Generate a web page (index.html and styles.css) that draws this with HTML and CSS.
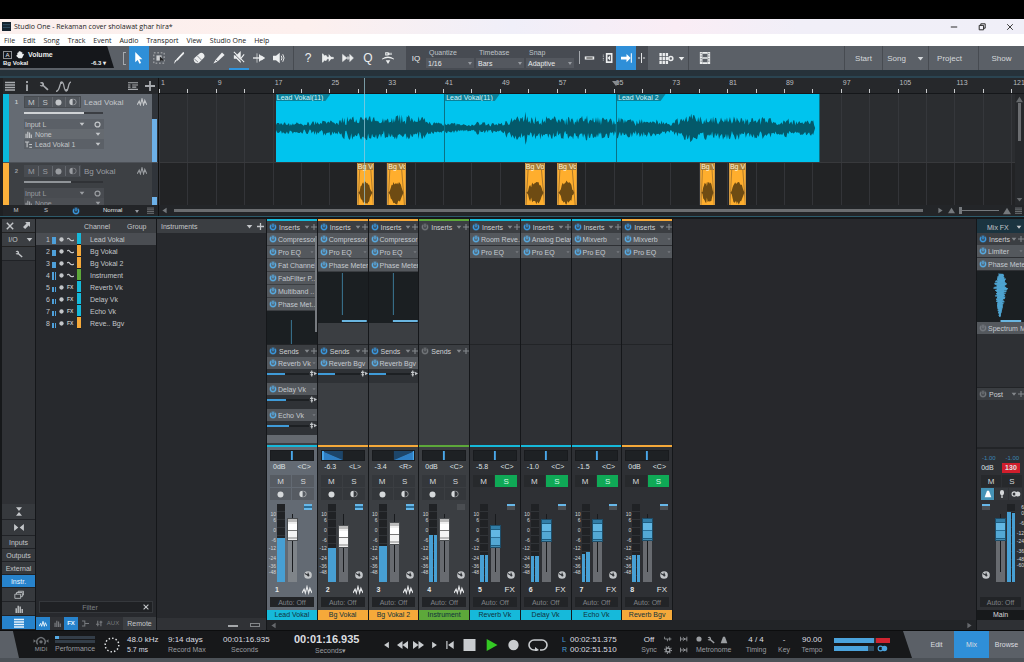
FILE: index.html
```html
<!DOCTYPE html>
<html lang="en">
<head>
<meta charset="utf-8">
<title>Studio One - Rekaman cover sholawat ghar hira*</title>
<link rel="stylesheet" href="styles.css">
</head>
<body>
<svg class="sprite" aria-hidden="true">
  <symbol id="power" viewBox="0 0 12 12"><circle cx="6" cy="6" r="5.500" fill="currentColor" opacity=".3"/><path d="M3.300 3.200a4 4 0 1 0 5.400 0M6 1v5" fill="none" stroke="currentColor" stroke-width="1.700"/></symbol>
  <symbol id="down" viewBox="0 0 10 10"><path d="M1 3h8L5 8z" fill="currentColor"/></symbol>
  <symbol id="left" viewBox="0 0 10 10"><path d="M8 1v8L2 5z" fill="currentColor"/></symbol>
  <symbol id="right" viewBox="0 0 10 10"><path d="M2 1v8l6-4z" fill="currentColor"/></symbol>
  <symbol id="play" viewBox="0 0 10 10"><path d="M1 0v10l9-5z" fill="currentColor"/></symbol>
  <symbol id="up" viewBox="0 0 10 10"><path d="M0 9h10L5 1z" fill="currentColor"/></symbol>
  <symbol id="plus" viewBox="0 0 10 10"><path d="M5 0v10M0 5h10" stroke="currentColor" stroke-width="1.800"/></symbol>
  <symbol id="close" viewBox="0 0 10 10"><path d="M1 1l8 8M9 1L1 9" stroke="currentColor" stroke-width="1.800"/></symbol>
  <symbol id="menu" viewBox="0 0 10 10"><path d="M0 1.500h10M0 4h10M0 6.500h10M0 9h10" stroke="currentColor" stroke-width="1.300"/></symbol>
  <symbol id="info" viewBox="0 0 10 10"><path d="M5 0v2M5 3.400V10" stroke="currentColor" stroke-width="1.800"/></symbol>
  <symbol id="wrench" viewBox="0 0 12 12"><path d="M1 2.500c1-2 4.500-1.800 5 1 .1.800 0 1.300 0 1.500L11.500 9.800 10 11.300 5 6.600C3 7 1.500 6.500 1 4.800L3.300 5 4.200 3.500z" fill="currentColor"/></symbol>
  <symbol id="curve" viewBox="0 0 14 10"><path d="M0 9.500C4 9.500 3 1 5.500 1S7 9 9.500 9 11 1 14 1" fill="none" stroke="currentColor" stroke-width="1.200"/><circle cx="5" cy="1.500" r="1.200" fill="currentColor"/><circle cx="9.500" cy="8.500" r="1.200" fill="currentColor"/></symbol>
  <symbol id="rows" viewBox="0 0 12 10"><path d="M0 1h12M0 9h12M0 3.700h3M5 3.700h7M0 6.300h3M5 6.300h5" stroke="currentColor" stroke-width="1.300"/></symbol>
  <symbol id="wave" viewBox="0 0 12 10"><path d="M0 8.500L2.500 4l1.500 4.500L6 1l2 7.500L9.500 3 12 8.500" fill="none" stroke="currentColor" stroke-width="1.400"/></symbol>
  <symbol id="rec" viewBox="0 0 10 10"><circle cx="5" cy="5" r="4.300" fill="currentColor"/></symbol>
  <symbol id="half" viewBox="0 0 10 10"><path d="M4.500 1a4 4 0 0 0 0 8z" fill="currentColor"/><path d="M5.500 1.500a3.500 3.500 0 0 1 0 7" fill="none" stroke="currentColor" opacity=".7"/></symbol>
  <symbol id="ring" viewBox="0 0 10 10"><circle cx="5" cy="5" r="3.500" fill="none" stroke="currentColor" stroke-width="1.800"/></symbol>
  <symbol id="bars" viewBox="0 0 10 10"><path d="M1.500 4v6M4 1v9M6.500 2v8M9 5v5" stroke="currentColor" stroke-width="1.700"/></symbol>
  <symbol id="notes" viewBox="0 0 10 10"><path d="M0 1.500h6M3 1v8M6 5h4M6 9h4" stroke="currentColor" stroke-width="1.600"/></symbol>
  <symbol id="bus" viewBox="0 0 10 10"><path d="M0 1.500h4v7H0M4 5h6" fill="none" stroke="currentColor" stroke-width="1.500"/></symbol>
  <symbol id="vca" viewBox="0 0 10 10"><path d="M2.500 1v8M7 1v8M0 6h5M5 3h4" stroke="currentColor" stroke-width="1.600"/></symbol>
  <symbol id="knob" viewBox="0 0 10 10"><circle cx="5" cy="5" r="4.800" fill="currentColor"/><path d="M5.500 5.500L1 3M5.500 5.500L5 2" stroke="#34373b" stroke-width="1.400"/><circle cx="5.500" cy="5.500" r="1.300" fill="#34373b"/></symbol>
  <symbol id="arrow" viewBox="0 0 12 16"><path d="M1 0l9.500 9.500H6.400l2.400 5-2.200 1-2.300-5L1 13.500z" fill="currentColor"/></symbol>
  <symbol id="range" viewBox="0 0 14 14"><path d="M1 1h12v12H1z" fill="none" stroke="currentColor" stroke-dasharray="2 2" opacity=".7"/><path d="M4 4h6v6H4z" fill="currentColor" opacity=".8"/><path d="M8 5l5 5H9l-1 2z" fill="#222"/></symbol>
  <symbol id="knife" viewBox="0 0 14 14"><path d="M13 0L5.500 9.500 4 8.500 12 0zM4.500 10L1 14l1.500-4.800z" fill="currentColor"/><path d="M12.500 1L4 10" stroke="currentColor" stroke-width="1.800"/></symbol>
  <symbol id="eraser" viewBox="0 0 14 14"><path d="M8 1.500c2-2 7 1 5 5L7 12.500c-3 2-7-1-6-5z" fill="currentColor"/><path d="M5 4.500l5 5M1.500 8l4.500 4" stroke="#555b62" stroke-width=".8"/></symbol>
  <symbol id="pencil" viewBox="0 0 14 14"><path d="M10.500.5l3 3L5 11.500l-4.500 2L3 9z" fill="currentColor"/><path d="M3 9l2.500 2" stroke="#555b62"/></symbol>
  <symbol id="mute" viewBox="0 0 14 14"><path d="M1 5h3l5-5v14L4 9H1z" fill="currentColor"/><path d="M1 1l12 12M13 4l-4 5" stroke="currentColor" stroke-width="1.300"/><path d="M0 2l11 11" stroke="#555b62"/></symbol>
  <symbol id="bend" viewBox="0 0 18 14"><path d="M0 7h17" stroke="currentColor" stroke-width="2"/><path d="M6 0v14" stroke="currentColor"/><path d="M9 1l2 2 3 1 4 3-4 3-3 1-2 2z" fill="currentColor"/></symbol>
  <symbol id="speaker" viewBox="0 0 16 14"><path d="M0 4h4l5-4v14L4 10H0z" fill="currentColor"/><path d="M11 4q2 3 0 6M13 2q3.500 5 0 10" fill="none" stroke="currentColor" stroke-width="1.300"/></symbol>
  <symbol id="strip" viewBox="0 0 18 14"><path d="M1 0v14M1 1l3 3 2-1 2 3h9v2H8l-2 3-2-1-3 3z" fill="currentColor" stroke="currentColor"/><path d="M10 1v12l5-6z" fill="currentColor"/></symbol>
  <symbol id="stretch" viewBox="0 0 20 14"><path d="M1 1v12l6-5V6zM13 1v12l6-6z" fill="currentColor" stroke="currentColor"/><path d="M6 7h8M10 4v6" stroke="currentColor" stroke-width="1.500"/></symbol>
  <symbol id="follow" viewBox="0 0 16 16"><path d="M0 9q8-6 16 0v1q-8-4-16 0zM5 11h6l-3 5z" fill="currentColor"/><path d="M5 1h3v3H5zM9.500 1v3M12 1v3" fill="none" stroke="currentColor" stroke-width="1.500"/></symbol>
  <symbol id="capsule" viewBox="0 0 14 8"><path d="M1 4h12" stroke="currentColor" stroke-width="4"/><path d="M3 4h8" stroke="#444" stroke-width="1.500"/></symbol>
  <symbol id="box" viewBox="0 0 12 12"><path d="M5 1h6v10H5z" fill="none" stroke="currentColor" stroke-width="2"/><path d="M9 3v6L6 6z" fill="currentColor"/><path d="M1 2v8" stroke="currentColor" stroke-dasharray="1 1"/></symbol>
  <symbol id="snap" viewBox="0 0 16 14"><path d="M0 5h8V1l6 6-6 6V9H0z" fill="currentColor"/><path d="M15 0v14" stroke="currentColor" stroke-width="1.500"/></symbol>
  <symbol id="cross" viewBox="0 0 12 14"><path d="M6 0v14M1 7h3M8 7h3" stroke="currentColor" stroke-width="1.300"/></symbol>
  <symbol id="grid" viewBox="0 0 18 14"><path d="M1.500 0v14M5.500 0v14M9.500 0v14" stroke="currentColor" stroke-width="3" stroke-dasharray="4 1"/><circle cx="14.500" cy="7" r="2.500" fill="none" stroke="currentColor" stroke-width="2"/></symbol>
  <symbol id="film" viewBox="0 0 12 14"><path d="M0 0h3v14H0zM9 0h3v14H9z" fill="currentColor"/><path d="M3 1h6M3 7h6M3 13h6" stroke="currentColor" stroke-width="2"/><path d="M1.500 1v12M10.500 1v12" stroke="#555b62" stroke-dasharray="1.500 1.500"/></symbol>
  <symbol id="hand" viewBox="0 0 12 12"><path d="M2 6V2.500h1.500V1H5V0h1.500v1H8v1h1.500v3L11 4l1 1-3 6H4L0 7z" fill="currentColor"/></symbol>
  <symbol id="popout" viewBox="0 0 10 10"><path d="M3 0h7v7L8 5 3 10 0 7l5-5z" fill="currentColor"/></symbol>
  <symbol id="stack" viewBox="0 0 12 10"><path d="M1 4h7v5H1zM3 4V2h7v5H8M5 2V.5h6.500V5H10" fill="none" stroke="currentColor"/></symbol>
  <symbol id="sine" viewBox="0 0 14 8"><path d="M0 3q3-3 6 1t8 1" fill="none" stroke="currentColor" stroke-width="2.500"/></symbol>
  <symbol id="vpin" viewBox="0 0 10 16"><path d="M0 1h10L5 7zM0 15h10L5 9z" fill="currentColor"/></symbol>
  <symbol id="hpin" viewBox="0 0 16 10"><path d="M1 0v10l6-5zM15 0v10L9 5z" fill="currentColor"/></symbol>
  <symbol id="rew" viewBox="0 0 14 10"><path d="M7 0v10L0 5zM14 0v10L7 5z" fill="currentColor"/></symbol>
  <symbol id="ffw" viewBox="0 0 14 10"><path d="M0 0v10l7-5zM7 0v10l7-5z" fill="currentColor"/></symbol>
  <symbol id="tostart" viewBox="0 0 12 10"><path d="M10 0v10L3 5z" fill="currentColor"/><path d="M1.500 0v10" stroke="currentColor" stroke-width="1.500"/></symbol>
  <symbol id="stop" viewBox="0 0 10 10"><path d="M0 0h10v10H0z" fill="currentColor"/></symbol>
  <symbol id="loop" viewBox="0 0 20 12"><path d="M8 11H6A5 5 0 0 1 6 1h8a5 5 0 0 1 0 10h-2" fill="none" stroke="currentColor" stroke-width="1.600"/><path d="M7 8l4 3-4 2z" fill="currentColor"/></symbol>
  <symbol id="midi" viewBox="0 0 18 12"><path d="M5 10a5 5 0 1 1 8 0" fill="none" stroke="currentColor" stroke-width="1.800"/><circle cx="9" cy="7" r="2" fill="currentColor"/><path d="M0 4l3 2-3 2zM18 4l-3 2 3 2z" fill="currentColor"/></symbol>
  <symbol id="gear" viewBox="0 0 12 12"><circle cx="6" cy="6" r="3" fill="none" stroke="currentColor" stroke-width="2"/><circle cx="6" cy="6" r="5" fill="none" stroke="currentColor" stroke-dasharray="1.500 2.400" stroke-width="2"/></symbol>
  <symbol id="metro" viewBox="0 0 12 12"><path d="M4.500 1h3l3.500 10H1z" fill="currentColor"/></symbol>
  <symbol id="punch" viewBox="0 0 14 10"><path d="M1 1v4h5v4M6 5h7M10 2v6" fill="none" stroke="currentColor" stroke-width="1.400"/></symbol>
  <symbol id="preroll" viewBox="0 0 14 10"><path d="M1 1v8M1 5h11M12 1v8M5 2l4 3-4 3" fill="none" stroke="currentColor" stroke-width="1.500"/></symbol>
  <symbol id="dots" viewBox="0 0 16 16"><circle cx="8" cy="8" r="6.800" fill="none" stroke="currentColor" stroke-width="1.500" stroke-dasharray="1.500 2.050"/></symbol>
  <symbol id="link" viewBox="0 0 14 8"><circle cx="4.500" cy="4" r="3" fill="none" stroke="currentColor" stroke-width="1.500"/><circle cx="9.500" cy="4" r="3.500" fill="currentColor"/></symbol>
  <symbol id="mic" viewBox="0 0 8 12"><path d="M4 0a3 3 0 0 1 3 3v2a3 3 0 0 1-6 0V3a3 3 0 0 1 3-3zM3 8h2v4H3z" fill="currentColor"/></symbol>
  <symbol id="sendout" viewBox="0 0 12 10"><path d="M3 0v10M0 3h6M1 7h4" stroke="currentColor" stroke-width="2"/><path d="M7 2l5 3-5 3z" fill="currentColor"/></symbol>
</svg>

<div class="letterbox"></div>
<header class="titlebar">
  <svg class="app-mark" viewBox="0 0 10 10"><rect width="10" height="10" fill="#14222e"/><path d="M1 3h8M1 6h8" stroke="#35556b"/></svg>
  <h1>Studio One - Rekaman cover sholawat ghar hira*</h1>
  <div class="window-buttons">
    <button aria-label="Minimize"><svg viewBox="0 0 10 10"><path d="M1 5h8" stroke="#333" stroke-width="1.300"/></svg></button>
    <button aria-label="Restore"><svg viewBox="0 0 10 10"><path d="M1.500 3h5.500v5.500H1.500zM3.500 3V1H9v5.500H7" fill="none" stroke="#222" stroke-width="1.200"/></svg></button>
    <button aria-label="Close"><svg viewBox="0 0 10 10"><path d="M1.500 1.500l7 7M8.500 1.500l-7 7" stroke="#333" stroke-width="1.200"/></svg></button>
  </div>
</header>
<nav class="menubar">
  <button>File</button><button>Edit</button><button>Song</button><button>Track</button><button>Event</button><button>Audio</button><button>Transport</button><button>View</button><button>Studio One</button><button>Help</button>
</nav>

<section class="toolbar" aria-label="Tools">
  <div class="param">
    <div class="param-line"><span class="auto-box">A</span><svg class="i8"><use href="#hand"/></svg><b>Volume</b></div>
    <div class="param-line small"><b>Bg Vokal</b><b class="push">-6.3 ▾</b></div>
  </div>
  <span class="bracket"></span>
  <div class="tools" id="tools"></div>
  <div class="tools second" id="tools2"></div>
  <div class="snapbar">
    <button class="iq">IQ</button>
    <label class="pick">Quantize<select><option>1/16</option></select></label>
    <label class="pick">Timebase<select><option>Bars</option></select></label>
    <label class="pick">Snap<select><option>Adaptive</option></select></label>
    <span class="bar"></span>
    <div class="tools snaps" id="tools3"></div>
  </div>
  <button class="grid-tool" aria-label="Grid"><svg class="wide"><use href="#grid"/></svg><svg class="i7"><use href="#down"/></svg></button>
  <button class="film-tool" aria-label="Video"><svg class="i12"><use href="#film"/></svg></button>
  <div class="pages">
    <button>Start</button><button>Song<svg class="i7"><use href="#down"/></svg></button><button>Project</button><button>Show</button>
  </div>
</section>

<section class="arrange" aria-label="Arrangement">
  <div class="track-side">
    <div class="side-tools">
      <svg class="i10"><use href="#menu"/></svg><svg class="i10"><use href="#info"/></svg><svg class="i10"><use href="#wrench"/></svg><svg class="wide"><use href="#curve"/></svg>
      <svg class="i10 push"><use href="#rows"/></svg><svg class="i10"><use href="#plus"/></svg>
    </div>
    <div id="tracks"></div>
    <div class="side-foot"><button>M</button><button>S</button><button class="on" aria-label="Power"><svg class="i8"><use href="#power"/></svg></button><label class="plain"><select aria-label="Track height"><option>Normal</option></select></label><svg class="i7 dim"><use href="#menu"/></svg></div>
  </div>
  <div class="timeline">
    <div class="ruler" id="ruler"></div>
    <div class="lanes" id="lanes"></div>
    <div class="hscroll"><svg class="i7"><use href="#left"/></svg><span class="hthumb"></span><svg class="i7"><use href="#right"/></svg><svg class="i7"><use href="#up"/></svg><input class="zoom" type="range" value="0" aria-label="Zoom"><svg class="i8"><use href="#up"/></svg><svg class="i7"><use href="#menu"/></svg></div>
    <div class="vscroll"><svg class="i7"><use href="#up"/></svg><span></span><svg class="i7"><use href="#down"/></svg></div>
  </div>
</section>

<section class="mixer" aria-label="Console">
  <aside class="rail">
    <div class="rail-head"><button aria-label="Close"><svg class="i8"><use href="#close"/></svg></button><button aria-label="Detach"><svg class="i7"><use href="#popout"/></svg></button></div>
    <div class="rail-io"><button>I/O</button><button aria-label="I/O menu"><svg class="i7"><use href="#down"/></svg></button></div>
    <button class="cell" aria-label="Settings"><svg class="i8"><use href="#wrench"/></svg></button>
    <div class="fill"></div>
    <button class="cell tall" aria-label="Small"><svg class="vp"><use href="#vpin"/></svg></button>
    <button class="cell tall" aria-label="Narrow"><svg class="hp"><use href="#hpin"/></svg></button>
    <button class="cell word">Inputs</button><button class="cell word">Outputs</button><button class="cell word">External</button><button class="cell word active">Instr.</button>
    <button class="cell" aria-label="Groups"><svg class="i10"><use href="#stack"/></svg></button>
    <button class="cell" aria-label="Faders"><svg class="i8"><use href="#bars"/></svg></button>
    <button class="cell active" aria-label="List"><svg class="i10"><use href="#menu"/></svg></button>
  </aside>
  <div class="channel-list">
    <table>
      <thead><tr><th colspan="5"></th><th>Channel</th><th>Group</th></tr></thead>
      <tbody id="list"></tbody>
    </table>
    <div class="fill"></div>
    <div class="filter"><input type="text" placeholder="Filter" aria-label="Filter"><button aria-label="Clear"><svg class="i6"><use href="#close"/></svg></button></div>
    <div class="chips"><button class="active" aria-label="Audio"><svg class="i8"><use href="#wave"/></svg></button><button aria-label="Instruments"><svg class="i7"><use href="#bars"/></svg></button><button class="active">FX</button><button aria-label="Bus"><svg class="i7"><use href="#bus"/></svg></button><button aria-label="VCA"><svg class="i7"><use href="#vca"/></svg></button><button>AUX</button><button class="remote">Remote</button></div>
  </div>
  <div class="instruments">
    <div class="inst-head"><span>Instruments</span><svg class="i7 push"><use href="#down"/></svg><svg class="i7"><use href="#plus"/></svg></div>
    <div class="fill"></div>
    <div class="inst-foot"><span class="dash"></span><span class="frame"></span></div>
  </div>
  <div class="console">
    <div class="strips" id="strips"></div>
    <div class="console-foot"><svg class="i7"><use href="#left"/></svg><svg class="i7"><use href="#right"/></svg></div>
  </div>
  <div class="main-strip" id="main"></div>
</section>

<footer class="transport">
  <span class="lead-in"></span>
  <div class="t midi"><svg class="mid"><use href="#midi"/></svg><small>MIDI</small></div>
  <div class="t perf"><i class="load one"></i><i class="load"></i><small>Performance</small></div>
  <svg class="i14"><use href="#dots"/></svg>
  <div class="t rate"><span>48.0 kHz</span><small class="lit">5.7 ms</small></div>
  <div class="t days"><span>9:14 days</span><small>Record Max</small></div>
  <div class="t now"><span>00:01:16.935</span><small>Seconds</small></div>
  <div class="t big"><b>00:01:16.935</b><small>Seconds▾</small></div>
  <div class="keys" id="keys"></div>
  <div class="t locate"><span><em>L</em>00:02:51.375</span><span><em>R</em>00:02:51.510</span></div>
  <div class="t sync"><span>Off</span><small>Sync</small></div>
  <div class="t pair"><svg class="i8"><use href="#punch"/></svg><svg class="i8"><use href="#gear"/></svg></div>
  <div class="t pair"><svg class="i8"><use href="#preroll"/></svg><svg class="i8"><use href="#preroll"/></svg></div>
  <div class="t click"><div><svg class="i6"><use href="#rec"/></svg><svg class="i8"><use href="#wrench"/></svg><svg class="i8"><use href="#metro"/></svg></div><small>Metronome</small></div>
  <div class="t sig"><span>4 / 4</span><small>Timing</small></div>
  <div class="t key"><span>-</span><small>Key</small></div>
  <div class="t tempo"><span>90.00</span><small>Tempo</small></div>
  <div class="out"><i></i><i class="short"></i><svg class="mid"><use href="#link"/></svg></div>
  <div class="views"><button>Edit</button><button class="active">Mix</button><button>Browse</button></div>
</footer>
<script src="app.js"></script>
</body>
</html>
```
FILE: styles.css
```css
* { box-sizing: border-box; }
body { margin: 0; min-height: 100vh; display: flex; flex-direction: column; background: #1a1c1f; color: #c3c6c9; font: 7px/9px "Liberation Sans", Arial, sans-serif; overflow: hidden; }
button, input, select { font: inherit; color: inherit; background: none; border: 0; padding: 0; margin: 0; border-radius: 0; }
button { display: flex; align-items: center; justify-content: center; white-space: nowrap; }
input[type=range] { appearance: none; display: block; min-width: 0; }
svg { display: block; flex: none; }
.sprite { position: absolute; width: 0; height: 0; }
.i6 { width: 6px; height: 6px; } .i7 { width: 7px; height: 7px; } .i8 { width: 8px; height: 8px; }
.i10 { width: 10px; height: 10px; } .i12 { width: 12px; height: 12px; } .i14 { width: 16px; height: 16px; }
.wide { width: 15px; height: 11px; } .mid { width: 16px; height: 10px; }
.push { margin-left: auto; } .fill { flex: 1; } .dim { opacity: .5; }

.letterbox { height: 19px; background: #000; }
.titlebar { display: flex; align-items: center; height: 15px; padding-left: 2px; gap: 3px; background: linear-gradient(90deg, #fbefed, #fdf0ee 30%, #f0eff9 50%, #faedf5 66%, #f1eff8 78%, #f0eff8); font-family: "Open Sans", sans-serif; color: #222; }
.app-mark { width: 9px; height: 9px; }
.titlebar h1 { margin: 0; font-size: 7px; font-weight: 400; }
.window-buttons { display: flex; margin-left: auto; }
.window-buttons button { width: 28px; }
.window-buttons svg { width: 8px; height: 8px; }
.menubar { display: flex; gap: 8px; height: 12px; padding-left: 4px; background: #fff; color: #1c1c1c; font-family: "Open Sans", sans-serif; }

.toolbar { display: flex; align-items: stretch; height: 24px; background: #5b6067; color: #eceeef; }
.param { width: 114px; height: 24px; padding: 4px 8px 0 3px; background: #15171b; clip-path: polygon(0 0, 94% 0, 100% 92%, 0 92%); }
.param-line { display: flex; align-items: center; gap: 4px; height: 9px; }
.param-line.small { font-size: 6px; }
.auto-box { border: 1px solid #8b8e92; width: 9px; height: 8px; line-height: 7px; text-align: center; font-size: 6px; }
.bracket { width: 3px; height: 13px; margin: 6px 3px 0 9px; border: 1px solid #a5a9ae; border-right: 0; }
.tools { display: flex; }
.tools button { width: 20px; }
.tools svg { width: 12px; height: 12px; }
.tools button.active { background: #2f8fd8; color: #fff; }
.tools button.under { border-bottom: 2px solid #3195dd; }
.tools button.word { font-size: 12px; }
.second { margin-left: 4px; padding: 0 8px 0 4px; border-left: 1px solid #474b51; }
.snapbar { display: flex; background: #474b52; padding-right: 1px; }
.iq { width: 20px; font-size: 8px; }
.pick { width: 48px; margin-right: 2px; padding-top: 2px; color: #bfc3c8; display: flex; flex-direction: column; gap: 1px; position: relative; text-indent: 3px; }
.pick::after { content: ""; position: absolute; right: 2px; top: 16px; border: 2px solid transparent; border-top: 3px solid #979ba1; border-bottom: 0; }
.pick select, .plain select { appearance: none; height: 10px; background: #54585f; color: #e6e8ea; text-indent: 2px; }
.bar { width: 1px; height: 13px; margin: 5px 0 0 3px; background: #a5a9ae; }
.snaps svg { width: 11px; height: 10px; }
.snaps button { width: 18px; }
.snaps button.active { width: 20px; }
.snaps button:last-child { width: 11px; }
.grid-tool { width: 41px; gap: 4px; padding-left: 7px; border-right: 1px solid #474b51; }
.film-tool { width: 32px; }
.pages { display: flex; margin-left: auto; color: #d5d8db; font-size: 8px; }
.pages button { width: 46px; gap: 11px; border-left: 1px solid #474b51; }
.pages button:first-child { width: 38px; }
.pages button:nth-child(3) { width: 50px; padding-right: 8px; }

.arrange { display: grid; grid-template-columns: 155px 1fr; margin-top: 6px; padding-left: 3px; border-top: 2px solid #2a4451; border-bottom: 1px solid #2d5a6a; background: #1e2023; box-shadow: 0 -6px #26323a; }
.track-side { display: flex; flex-direction: column; }
.side-tools { display: flex; align-items: center; gap: 7px; height: 16px; padding: 0 3px 0 2px; background: #26282b; color: #a9acb0; }
.track { display: grid; grid-template-columns: 6px 1fr 6px; height: 69px; background: #656b73; border-bottom: 1px solid #4d5157; overflow: hidden; }
.track.idle { height: 42px; background: #3d4044; color: #9a9da1; border: 0; }
.track-color { background: #0ab9dc; } .idle .track-color { background: #fbb03b; }
.track-meter { display: flex; align-items: flex-end; background: #30343a; }
.track-meter i { width: 5px; background: #6cb0e8; }
.track-body { display: grid; grid-template-columns: 15px 1fr; padding: 2px 5px 0 0; }
.track-body > b { text-align: center; font-size: 6px; line-height: 13px; }
.track-top { display: flex; align-items: center; height: 12px; font-size: 8px; }
.track-top .msr { display: flex; width: 57px; height: 12px; background: #50555b; border: 1px solid #474b50; margin-right: 3px; }
.msr button { flex: 1; border-right: 1px solid #63676d; }
.track-top .i10 { margin-left: auto; height: 8px; }
.idle .msr { background: #484b50; }
.level { width: 79px; height: 2px; margin: 4px 0 5px; background: linear-gradient(90deg, #d0d3d6 var(--v), #3b3e43 var(--v)); }
.idle .level { background: linear-gradient(90deg, #909498 var(--v), #303236 var(--v)); }
.route { display: flex; align-items: center; width: 80px; height: 10px; padding: 0 3px 0 1px; gap: 3px; background: #5b6067; }
.idle .route { background: #484b50; }
.route:nth-child(even) { background: #656a70; } .idle .route:nth-child(even) { background: #4c4f54; }
.route .i6 { margin-left: auto; }
.route .i6 + .i7 { margin-left: 6px; }
.side-foot { display: flex; align-items: center; height: 11px; padding-left: 8px; background: #232528; font-size: 6px; }
.side-foot button { width: 10px; margin-right: 20px; } .side-foot .on { color: #3a9ce6; }
.plain { width: 46px; position: relative; } .plain select { background: none; width: 100%; }
.plain::after { content: ""; position: absolute; right: 8px; top: 4px; border: 2px solid transparent; border-top: 3px solid #979ba1; border-bottom: 0; }

.timeline { position: relative; overflow: hidden; border-left: 1px solid #111; }
.ruler { position: relative; height: 16px; background: #26282b; border-bottom: 1px solid #15171a; }
.ruler span { position: absolute; top: 0; padding-left: 2px; color: #b9bcbf; }
.ruler i { position: absolute; bottom: 0; width: 1px; height: 4px; background: #c9cbcd; }
.locator { position: absolute; top: 0; color: #888c90; transform: translateX(-50%); }
.lane { position: relative; height: 69px; background: #2b2d30; border-bottom: 1px solid #38393c; }
.lane.short { height: 42px; background: #222325; border: 0; }
.lane > i { position: absolute; top: 0; bottom: 0; width: 1px; background: #3a3c40; opacity: .7; }
.clip { position: absolute; top: 0; bottom: 0; background: #00c4ee; overflow: hidden; border-right: 1px solid #0b7285; font-size: 7px; line-height: 7px; color: #d5f6fd; }
.clip span { display: inline-block; height: 7px; padding: 0 7px 0 1px; background: #0b8099; clip-path: polygon(0 0, 100% 0, calc(100% - 5px) 100%, 0 100%); white-space: nowrap; vertical-align: top; }
.clip svg { position: absolute; left: 0; top: 17px; width: 100%; height: 34px; }
.clip.bg { background: #ffae2d; border: 1px solid #d49a42; border-width: 0 1px; color: #fff1d4; }
.clip.bg span { display: block; padding: 0; background: #a97e38; clip-path: none; }
.clip.bg svg { top: 7px; height: 35px; }
.playhead { position: absolute; top: 0; bottom: 11px; width: 1px; background: #9ccbd8; opacity: .7; }
.hscroll { display: flex; align-items: center; height: 11px; padding: 0 2px; gap: 4px; background: #232528; color: #75797d; }
.hthumb { flex: 1; height: 3px; background: #6b6d70; margin: 0 10px 0 2px; }
.zoom { width: 40px; height: 7px; background: linear-gradient(#75797d, #75797d) center / 100% 1px no-repeat; }
.zoom::-webkit-slider-thumb { appearance: none; width: 3px; height: 7px; background: #75797d; }
.vscroll { position: absolute; right: 0; top: 16px; bottom: 11px; width: 9px; display: flex; flex-direction: column; align-items: center; justify-content: space-between; padding: 2px 0; background: #26282b; color: #66696c; }
.vscroll span { width: 3px; height: 38px; margin-bottom: auto; background: #6b6d70; }

.mixer { flex: 1; display: grid; grid-template-columns: 34px 121px 110px 1fr 48px; padding-left: 2px; border-top: 2px solid #15171a; background: #16181a; min-height: 411px; }
.rail, .channel-list, .instruments { display: flex; flex-direction: column; background: #27292d; border-right: 1px solid #15171a; }
.rail { background: #2f3135; }
.rail-head, .rail-io { display: flex; height: 14px; background: #3b3e42; border-bottom: 1px solid #222; }
.rail-head button, .rail-io button { flex: 1; } .rail-io button:first-child { flex: 2; }
.cell { height: 14px; background: #36393d; border-bottom: 1px solid #202226; }
.cell.tall { height: 16px; } .cell.word { height: 13px; } .cell .vp { width: 6px; height: 11px; } .cell .hp { width: 12px; height: 7px; }
.cell.active, .chips .active { background: #2783cc; color: #eaf5fd; }
table { width: 100%; border-collapse: collapse; table-layout: auto; }
th { height: 14px; padding: 0; text-align: left; font-weight: 400; background: #3b3e42; }
td { height: 12px; padding: 0; line-height: 9px; }
td:nth-child(1) { width: 16px; text-align: right; padding-right: 2px; }
td:nth-child(2) { width: 7px; } td:nth-child(3) { width: 8px; } td:nth-child(4) { width: 10px; font-size: 5px; font-weight: 700; } td:nth-child(5) { width: 7px; }
td:nth-child(6) { padding-left: 6px; } th:last-child { width: 29px; }
td .i6 { width: 5px; height: 5px; }
td .sine { width: 7px; height: 5px; }
.selected { background: #4a4d52; }
.mini { display: flex; align-items: flex-end; gap: 1px; width: 4px; height: 9px; } .mini i { flex: 1; background: #4ea0da; }
.tag { display: block; width: 4px; height: 12px; background: var(--c); border-bottom: 1px solid #1b1d20; }
.filter { display: flex; margin: 0 3px 4px; height: 12px; border: 1px solid #35383c; background: #1f2124; }
.filter input { flex: 1; min-width: 0; text-align: center; } .filter button { width: 12px; } .filter input::placeholder { color: #7c8084; }
.chips { display: flex; height: 13px; background: #2f3135; } .chips button { width: 14px; color: #777a7e; font-size: 6px; }
.chips .active { font-weight: 700; } .chips .remote { flex: 1; font-size: 7px; background: #3b3e42; color: #c3c6c9; margin-left: 3px; }
.inst-head { display: flex; align-items: center; height: 14px; padding: 0 2px 0 4px; gap: 4px; background: #3b3e42; }
.inst-foot { display: flex; align-items: flex-end; justify-content: flex-end; gap: 12px; height: 12px; padding: 0 6px 3px; background: #303236; }
.dash { width: 10px; height: 2px; background: #a5a8ab; } .frame { width: 10px; height: 4px; border: 1px solid #84878a; }

.console { display: flex; flex-direction: column; background: #27282c; }
.strips { flex: 1; display: grid; grid-template-columns: repeat(8, 1fr); width: 406px; }
.strip { display: flex; flex-direction: column; min-width: 0; border-right: 1px solid #15171a; background: #3b3e42; }
.strip.fx { background: #2e3034; }
.rack { height: 126px; border-top: 2px solid var(--c); border-bottom: 1px solid #222427; overflow: hidden; position: relative; flex: none; }
.long::after { content: ""; position: absolute; right: 0; top: 15px; width: 2px; height: 96px; background: #777b80; }
.sends { flex: 1; overflow: hidden; }
.head { display: flex; align-items: center; gap: 1px; height: 12px; padding: 0 0 0 2px; background: #3b3e42; color: #ced1d4; } .head span { flex: 1; padding-left: 1px; } .head .i6 { color: #83878b; }
.on { color: #3a9ce6; } .off { color: #73777b; }
.slot { position: relative; display: flex; width: 100%; justify-content: flex-start; gap: 1px; height: 12px; margin-bottom: 1px; padding: 0 0 0 2px; background: #54585d; color: #c4cad0; font-size: 7px; }
.slot .i8 { color: #58aee8; } .slot .i8.off { color: #777b80; }
.slot .caret { position: absolute; right: 1px; top: 4px; width: 4px; height: 4px; color: #777b80; }
.long .slot .caret { right: 3px; }
.scope { height: 51px; background: #1b1f22; }
.scope svg { width: 100%; height: 51px; }
.send { height: 26px; background: #2f3236; }
.send-line { display: flex; align-items: center; height: 7px; gap: 1px; }
.send-line input { flex: 1; height: 2px; background: linear-gradient(90deg, #3f9bd8 var(--v), #1d2023 var(--v)); }
.send-line input::-webkit-slider-thumb { appearance: none; width: 0; height: 2px; }
.more { height: 8px; background: #656a70; }
.desk { border-top: 2px solid var(--c); padding-top: 3px; flex: none; }
.picked .desk { background: #636a73; }
.pan { display: block; width: calc(100% - 6px); height: 11px; margin: 0 3px; background: #1e2124; border: 1px solid #191b1e; }
.nums { display: flex; justify-content: space-around; height: 12px; line-height: 12px; color: #dfe2e5; }
.btns { height: 25px; margin: 2px 3px 4px; display: grid; grid-template-columns: 1fr 1fr; grid-auto-rows: 12px; gap: 1px; align-content: start; color: #d5d8da; }
.btns button { background: #34373b; font-size: 8px; } .picked .btns button { background: #565b62; }
.fx .btns button { background: #27292c; } .fx .btns .solo { background: #0fa956; color: #d7f7e3; }
.fade { display: grid; grid-template-columns: 9px 9px 13px 1fr; height: 78px; }
.scale { display: flex; flex-direction: column; font-size: 5px; line-height: 6px; text-align: right; padding-top: 7px; color: #d5d8da; }
.scale span { height: 10px; } .scale span:first-child { height: 6px; } .scale span:nth-child(4), .scale span:nth-child(6) { height: 8px; } .scale span:nth-child(7) { height: 6px; }
.vu { display: flex; align-items: flex-end; gap: 1px; margin-left: 1px; background: repeating-linear-gradient(#202225 0 7px, #303337 7px 8px); }
.vu i { flex: 1; background: #479fd3; }
.fader { appearance: none; writing-mode: vertical-lr; direction: rtl; width: 11px; height: 78px; margin-left: 2px; background: linear-gradient(#191b1e, #191b1e) center / 1px 58px no-repeat, linear-gradient(transparent 28px, #686b70 28px) center / 9px 100% no-repeat; }
.picked .fader { background: linear-gradient(#191b1e, #191b1e) center / 1px 58px no-repeat, linear-gradient(transparent 28px, #7f8489 28px) center / 9px 100% no-repeat; }
.fader::-webkit-slider-thumb { appearance: none; width: 11px; height: 23px; border: 1px solid #4a4d50; background: linear-gradient(#bbb 0 3px, #eee 3px 5px, #fff 5px 11px, #777 11px 12px, #f4f4f4 12px 18px, #bbb 18px 20px, #eee 20px); }
.fx .fader::-webkit-slider-thumb, .main-strip .fader::-webkit-slider-thumb { background: linear-gradient(#327ea8 0 3px, #1e5d80 3px 4px, #62b7e3 4px 11px, #2b7199 11px 12px, #53a8d4 12px 19px, #1e5d80 19px 20px, #438db3 20px); border-color: #1e4d68; }
.side { display: flex; flex-direction: column; align-items: center; justify-content: space-between; padding: 0 0 3px 2px; }
.bus { width: 8px; height: 6px; background: linear-gradient(#67b7e8 0 2px, #2b6d96 2px 4px, #67b7e8 4px); } .fx .bus, .main-strip .bus { background: linear-gradient(#67b7e8 0 2px, #4b5055 2px); } .bus.none { background: #4b4e52; }
.idline { display: flex; align-items: center; justify-content: space-between; height: 15px; padding: 0 5px 0 8px; color: #e5e7e9; font-size: 7px; font-weight: 700; } .idline em { font-style: normal; font-size: 8px; font-weight: 400; }
.autom { display: block; width: calc(100% - 6px); height: 10px; margin: 0 3px 3px; background: #222427; color: #7f8286; font-size: 7px; }
.strip-name { height: 10px; line-height: 10px; text-align: center; background: var(--c); color: #10323c; white-space: nowrap; }
.console-foot { display: flex; align-items: center; justify-content: space-between; height: 10px; padding: 0 3px; background: #222427; color: #66696d; }
.main-strip { --c: #222427; display: flex; flex-direction: column; overflow: hidden; background: #2e3034; border-left: 1px solid #15171a; }
.mixfx { display: flex; align-items: center; gap: 4px; height: 14px; padding: 2px 2px 0 10px; background: #1b3440; } .mixfx span { flex: 1; }
.main-strip .rack { height: 155px; border-top: 0; } .main-strip .desk { padding-top: 4px; } .main-strip .nums { height: 10px; line-height: 10px; }
.main-strip .peaks { color: #3b87b5; font-size: 6px; } .clipped { background: #d11e2c; padding: 0 3px; font-weight: 700; }
.main-strip .btns { grid-template-columns: repeat(6, 1fr); margin: 2px 2px 4px 4px; } .main-strip .btns button { grid-column: span 2; } .main-strip .btns button:nth-child(-n+2) { grid-column: span 3; background: #27292c; } .main-strip .btns .lit { background: #4593b6; color: #fff; }
.main-strip .fade { grid-template-columns: 17px 12px 9px 9px; } .main-strip .side { padding-left: 0; } .main-strip .scale { padding-top: 0; } .main-strip .fader { margin-left: 1px; }
.main-strip .strip-name { background: #17191b; color: #d9dbdd; } .main-strip .tail { height: 10px; }

.transport { display: flex; align-items: center; height: 32px; border-top: 1px solid #0c0d0e; border-bottom: 4px solid #4c5157; background: #17181a; color: #dcdee0; overflow: hidden; }
.lead-in { align-self: stretch; width: 19px; margin-right: 8px; background: #5b6067; clip-path: polygon(0 0, 68% 0, 100% 100%, 0 100%); }
.t { display: flex; flex-direction: column; gap: 1px; flex: none; white-space: nowrap; font-size: 8px; } .t small { font-size: 6px; color: #999ca0; } .t small.lit { color: #dcdee0; font-size: 7px; }
.midi { width: 28px; align-items: center; color: #6c7074; } .midi svg { margin-bottom: -2px; }
.perf { width: 49px; } .load { width: 40px; height: 3px; background: #333d48; } .load.one { background: linear-gradient(90deg, #55a9e2 4px, #333d48 4px); } .perf small { font-size: 7px; }
.rate { margin-left: 7px; width: 41px; } .days { width: 55px; } .days small { font-size: 7px; } .now { width: 71px; } .now small { padding-left: 8px; font-size: 7px; }
.big { width: 84px; font-size: 11px; } .big b { line-height: 11px; } .big small { padding-left: 21px; font-size: 7px; }
.keys { display: flex; align-items: center; flex: none; width: 184px; color: #c9cccf; } .keys button { width: 16px; } .keys svg { width: 11px; height: 8px; } .keys .large { width: 22px; } .keys .large svg { width: 13px; height: 12px; } .keys .play { color: #34c924; } .keys .loop { width: 28px; } .keys .loop svg { width: 20px; }
.locate { width: 72px; } .locate em { color: #4a9fd2; font-style: normal; font-size: 7px; display: inline-block; width: 8px; }
.sync { width: 24px; align-items: center; margin: 0 3px 0 3px; } .pair { width: 16px; gap: 3px; color: #9b9ea2; } .click { width: 46px; } .click small { font-size: 7px; } .click div { display: flex; gap: 5px; color: #9b9ea2; } .sig { width: 28px; align-items: center; } .key { width: 28px; align-items: center; } .tempo { width: 28px; align-items: center; }
.sync small, .sig small, .key small, .tempo small { font-size: 7px; }
.out { width: 56px; margin-left: 8px; display: grid; gap: 2px 3px; grid-template-columns: 40px 1fr; flex: none; align-items: center; } .out i { height: 5px; background: linear-gradient(90deg, #4ba3dc 85%, #2e4a5d 85%); } .out i:first-child { grid-column: span 2; background: linear-gradient(90deg, #4ba3dc 72%, #333 72% 75%, #cf2430 75%); } .out svg { width: 11px; height: 7px; color: #4ba3dc; }
.views { display: flex; align-self: stretch; margin-left: auto; min-width: 121px; padding-left: 16px; background: #5b6067; clip-path: polygon(0 0, 100% 0, 100% 100%, 9px 100%); } .views button { flex: 1; min-width: 34px; } .views .active { background: #2f8fd8; }
```
FILE: app.js
```js
const CYAN = '#16b9da', ORANGE = '#f5a93a', GREEN = '#5da83a';
const BARS = 121.8;
const icon = (name, cls = 'i8') => `<svg class="${cls}"><use href="#${name}"/></svg>`;
const fill = (id, html) => { document.getElementById(id).innerHTML = html; };
const at = bar => ((bar - 1) / BARS * 100).toFixed(3) + '%';

const tool = ([name, cls = '']) => `<button class="${cls}" aria-label="${name}">${icon(name)}</button>`;
fill('tools', [['arrow', 'active'], ['range'], ['knife'], ['eraser'], ['pencil'], ['mute', 'under'], ['bend'], ['speaker']].map(tool).join(''));
fill('tools2', `<button class="word">?</button>${tool(['strip'])}${tool(['stretch'])}<button class="word">Q</button>${tool(['follow'])}`);
fill('tools3', [['capsule'], ['box'], ['snap', 'active'], ['cross']].map(tool).join(''));

const track = (n, name, idle, level, meter) => `<div class="track ${idle}"><span class="track-color"></span>
  <div class="track-body"><b>${n}</b><div>
    <div class="track-top"><span class="msr"><button>M</button><button>S</button><button aria-label="Record">${icon('rec', 'i7')}</button><button aria-label="Monitor">${icon('half')}</button></span>${name}${icon('wave', 'i10')}</div>
    <div class="level" style="--v:${level}%"></div>
    <div class="route">Input L${icon('down', 'i6')}${icon('ring', 'i7')}</div>
    <div class="route">${icon('bars', 'i7')}None${icon('down', 'i6')}</div>
    ${idle ? '' : `<div class="route">${icon('notes', 'i7')}Lead Vokal 1${icon('down', 'i6')}</div>`}
  </div></div><span class="track-meter"><i style="height:${meter}%"></i></span></div>`;
fill('tracks', track(1, 'Lead Vokal', '', 76, 63) + track(2, 'Bg Vokal', 'idle', 60, 25));

let ruler = '', lines = '';
for (let bar = 1; bar < 122; bar += 4) {
  ruler += `<i style="left:${at(bar)}"></i>`;
  lines += `<i style="left:${at(bar)}"></i>`;
  if (bar % 8 === 1) ruler += `<span style="left:${at(bar)}">${bar}</span>`;
}
fill('ruler', ruler + `<svg class="locator i10" style="left:${at(65.4)}"><use href="#down"/></svg>`);

let seed = 7;
const rand = () => (seed = seed * 16807 % 2147483647) / 2147483647;
// Envelope points are [position 0..1, amplitude].
function waveform(points, width, color, noise = 0.6) {
  const top = [], bottom = [];
  for (let x = 0; x <= width; x += 1) {
    const p = x / width;
    let k = 1;
    while (k < points.length - 1 && points[k][0] < p) k++;
    const [x0, a0] = points[k - 1], [x1, a1] = points[k];
    const amp = a0 + (a1 - a0) * (p - x0) / (x1 - x0);
    const dip = rand() < .12 ? .55 : 1;
    top.push(`${x},${(17 - amp * dip * (1 - noise + noise * rand())).toFixed(1)}`);
    bottom.unshift(`${x},${(17 + amp * dip * (1 - noise + noise * rand())).toFixed(1)}`);
  }
  return `<svg viewBox="0 0 ${width} 34" preserveAspectRatio="none"><polygon fill="${color}" points="${top.concat(bottom).join(' ')}"/></svg>`;
}
const leads = [
  ['Lead Vokal(11)', 17.45, 41.3, 170, [[0, 6], [.15, 6], [.3, 8], [.36, 7], [.4, 12], [.62, 12], [.7, 11], [.72, 14], [.88, 12], [.89, 7], [1, 6]]],
  ['Lead Vokal(11)', 41.3, 65.5, 172, [[0, 7], [.1, 4], [.17, 4], [.2, 8], [.25, 5], [.35, 6], [.36, 12], [.45, 12], [.47, 18], [.49, 12], [.7, 12], [.85, 13], [1, 10]]],
  ['Lead Vokal 2', 65.5, 94.1, 204, [[0, 11], [.1, 9], [.2, 9], [.27, 4], [.3, 11], [.35, 13], [.37, 18], [.39, 12], [.6, 12], [.75, 11], [.8, 7], [.85, 10], [.9, 7], [.97, 9], [.98, 0], [1, 0]]]
];
const backs = [[28.85, 31.3], [33.15, 35.75], [52.5, 55.4], [57.1, 59.8], [77.2, 79.35], [81.25, 83.7]];
const blob = [[0, 0], [.1, 1], [.2, 9], [.5, 12], [.75, 10], [.88, 3], [.93, 0], [1, 0]];
const place = (a, b) => `left:${at(a)};width:${((b - a) / BARS * 100).toFixed(3)}%`;
fill('lanes',
  `<div class="lane">${lines}${leads.map(([name, a, b, w, env]) => `<div class="clip" style="${place(a, b)}"><span>${name}</span>${waveform(env, w, '#04596a')}</div>`).join('')}</div>
   <div class="lane short">${lines}${backs.map(([a, b]) => `<div class="clip bg" style="${place(a, b)}"><span>Bg Vokal</span>${waveform(blob, 18, '#6e4b13', .3).replace('</svg>', '<path d="M0 34L2 0M18 34L15 0" stroke="#8b632a" fill="none" stroke-width=".7"/></svg>').replace('<polygon', '<polygon transform="translate(0 5)"')}</div>`).join('')}</div>
   <span class="playhead" style="left:${at(29.85)}"></span>`);

const channels = [
  { name: 'Lead Vokal', color: CYAN, db: '0dB', pan: 'C', fader: 75, vu: [57], fx: ['Compressor', 'Pro EQ', 'Fat Channel', 'FabFilter P..', 'Multiband ..', 'Phase Met..'], scope: 1, sends: [['Reverb Vk', 42], ['Delay Vk', 45], ['Echo Vk', 53]], picked: true },
  { name: 'Bg Vokal', color: ORANGE, db: '-6.3', pan: 'L', fader: 61, vu: [44], fx: ['Compressor', 'Pro EQ', 'Phase Meter'], scope: 2, sends: [['Reverb Bgv', 41]] },
  { name: 'Bg Vokal 2', color: ORANGE, db: '-3.4', pan: 'R', fader: 67, vu: [46], fx: ['Compressor', 'Pro EQ', 'Phase Meter'], scope: 2, sends: [['Reverb Bgv', 41]] },
  { name: 'Instrument', color: GREEN, db: '0dB', pan: 'C', fader: 75, vu: [60, 60], fx: [], sends: [] },
  { name: 'Reverb Vk', color: CYAN, db: '-5.8', pan: 'C', fader: 62, vu: [34, 34], fx: ['Room Reve..', 'Pro EQ'], bus: true },
  { name: 'Delay Vk', color: CYAN, db: '-1.0', pan: 'C', fader: 73, vu: [33, 33], fx: ['Analog Delay', 'Pro EQ'], bus: true },
  { name: 'Echo Vk', color: CYAN, db: '-1.5', pan: 'C', fader: 72, vu: [36, 38], fx: ['Mixverb', 'Pro EQ'], bus: true },
  { name: 'Reverb Bgv', color: ORANGE, db: '0dB', pan: 'C', fader: 75, vu: [34, 34], fx: ['Mixverb', 'Pro EQ'], bus: true }
];

fill('list', channels.map((c, i) => `<tr class="${c.picked ? 'selected' : ''}"><td>${i + 1}</td><td><span class="mini">${c.vu.map(v => `<i style="height:${c.bus ? 45 : v + 20}%"></i>`).join('')}</span></td><td>${icon('rec', 'i6')}</td><td>${c.bus ? 'FX' : icon('sine', 'sine')}</td><td><span class="tag" style="--c:${c.color}"></span></td><td colspan="2">${c.name === 'Reverb Bgv' ? 'Reve.. Bgv' : c.name}</td></tr>`).join(''));

const head = (title, on) => `<div class="head">${icon('power', 'i8 ' + (on ? 'on' : 'off'))}<span>${title}</span>${icon('down', 'i6')}${icon('plus', 'i6')}</div>`;
const slot = (name, off = '') => `<button class="slot">${icon('power', 'i8 ' + off)}<span>${name}</span>${name.length < 10 ? icon('down', 'caret') : ''}</button>`;
const scope = kind => `<div class="scope"><svg viewBox="0 0 50 51" preserveAspectRatio="none"><path d="M24.500 ${kind === 1 ? 9 : 1}V${kind === 1 ? 51 : 43}" stroke="#3c7897"/>${kind === 2 ? '<path d="M24 49h25" stroke="#69b5e0" stroke-width="2"/>' : ''}</svg></div>`;
const panArt = { C: '<path d="M22 0v11" stroke="#4aa8ea" stroke-width="2"/>', L: '<path d="M0 0h22v11z" fill="#1d4569"/><path d="M0 0l22 11H0z" fill="#2f7fc4"/><path d="M1 0v11" stroke="#4aa8ea" stroke-width="2"/>', R: '<path d="M44 0H22v11z" fill="#1d4569"/><path d="M44 0L22 11h22z" fill="#2f7fc4"/><path d="M43 0v11" stroke="#4aa8ea" stroke-width="2"/>' };
const scale = marks => `<span class="scale">${marks.map(n => `<span>${n}</span>`).join('')}</span>`;
const marks = [10, 6, 0, -6, -12, -24, -36, -48];
const vu = levels => `<span class="vu">${levels.map(v => `<i style="height:${v}%"></i>`).join('')}</span>`;

fill('strips', channels.map((c, i) => `<article class="strip ${c.bus ? 'fx' : ''} ${c.picked ? 'picked' : ''}" style="--c:${c.color}">
  <div class="rack ${c.picked ? 'long' : ''}">${head('Inserts', c.fx.length)}${c.fx.map(n => slot(n)).join('')}${c.scope ? scope(c.scope) : ''}</div>
  <div class="sends">${c.bus ? '' : head('Sends', c.sends.length) + c.sends.map(([n, v]) => `<div class="send">${slot(n)}<div class="send-line"><input type="range" value="${v}" aria-label="${n} level" style="--v:${v}%">${icon('sendout', 'i7')}</div></div>`).join('')}${c.picked ? '<div class="more"></div>' : ''}</div>
  <div class="desk">
    <svg class="pan" viewBox="0 0 44 11" preserveAspectRatio="none">${panArt[c.pan]}</svg>
    <div class="nums"><span>${c.db}</span><span>&lt;${c.pan}&gt;</span></div>
    <div class="btns"><button>M</button><button class="solo">S</button>${c.bus ? '' : `<button aria-label="Record">${icon('rec', 'i7')}</button><button aria-label="Monitor">${icon('half')}</button>`}</div>
    <div class="fade">${scale(marks)}${vu(c.vu)}<input class="fader" type="range" value="${c.fader}" aria-label="${c.name} volume"><span class="side"><span class="bus ${i === 3 ? 'none' : ''}"></span>${icon('knob')}</span></div>
    <div class="idline"><span>${i + 1}</span>${c.bus ? '<em>FX</em>' : icon('wave', 'i10')}</div>
    <button class="autom">Auto: Off</button>
    <div class="strip-name">${c.name}</div>
  </div></article>`).join(''));

const cloud = Array.from({ length: 110 }, (_, i) => {
  const y = 3 + i * 43 / 110, spread = y < 16 ? 3 + y * .3 : 8 - (y - 16) * .24;
  return `${(25 + (i % 2 ? 1 : -1) * spread * (.5 + .5 * rand()) - (y - 20) * .03).toFixed(1)},${y.toFixed(1)}`;
}).join(' ');
fill('main', `<div class="mixfx"><span>Mix FX</span>${icon('down', 'i6')}</div>
  <div class="rack">${head('Inserts', true)}${slot('Limiter')}${slot('Phase Meter')}
    <div class="scope"><svg viewBox="0 0 50 51" preserveAspectRatio="none"><polyline points="${cloud}" fill="none" stroke="#4fa7d4" stroke-width=".9"/><path d="M25 50h22" stroke="#69b5e0" stroke-width="2"/></svg></div>
    ${slot('Spectrum M..', 'off')}</div>
  <div class="sends">${head('Post', false)}</div>
  <div class="desk"><div class="nums peaks"><span>-1.00</span><span>-1.00</span></div>
    <div class="nums"><span>0dB</span><span class="clipped">130</span></div>
    <div class="btns"><button>M</button><button>S</button><button class="lit" aria-label="Click">${icon('metro', 'i8')}</button><button aria-label="Talkback">${icon('mic', 'i8')}</button><button aria-label="Channel mode">${icon('link', 'i10')}</button></div>
    <div class="fade"><span class="side"><span class="bus"></span>${icon('knob')}</span><input class="fader" type="range" value="75" aria-label="Main volume">${vu([90, 88])}${scale([6, 0, -6, -12, -24, -36, -48, -60])}</div>
    <div class="idline"></div><button class="autom">Auto: Off</button><div class="strip-name">Main</div><div class="tail"></div></div>`);

fill('keys', [['left', ''], ['rew', ''], ['ffw', ''], ['right', ''], ['tostart', ''], ['stop', 'large'], ['play', 'large play'], ['rec', 'large'], ['loop', 'large loop']].map(([name, cls]) => `<button class="${cls}" aria-label="${name}">${icon(name, 'i8')}</button>`).join(''));
```
